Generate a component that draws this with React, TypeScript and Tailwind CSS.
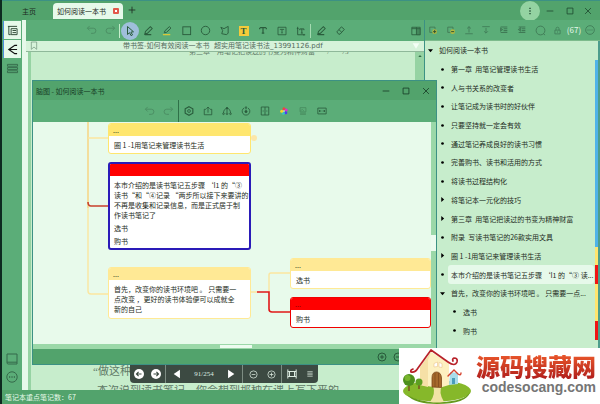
import React from 'react'
import clsx from 'clsx'

type IconProps = { children: React.ReactNode; className?: string }

const Icon = ({ children, className = 'size-3' }: IconProps) => (
  <svg viewBox="0 0 12 12" className={clsx('shrink-0 overflow-visible', className)} fill="none" stroke="currentColor" strokeWidth="1" aria-hidden="true">
    {children}
  </svg>
)

const icons = {
  undo: <path d="M1.5 3.5H8a2.8 2.8 0 0 1 0 5.6H5.5M4 1L1.5 3.5L4 6" />,
  redo: <path d="M10.5 3.5H4a2.8 2.8 0 0 0 0 5.6h2.5M8 1l2.5 2.5L8 6" />,
  cursor: <path d="M3.5 1.5v8l2-1.8 1.6 3 1.4-.8-1.6-2.8 2.6-.3z" />,
  pen: <path d="M2 10l.7-3L8 1.8l2 2L4.8 9zM2 10.5h7" strokeWidth="1.1" />,
  marker: (
    <>
      <path d="M2.5 8.5l.7-2.2L8 1.8l1.8 1.6L5 8z" />
      <path d="M1 10.5h8" stroke="#d8c83a" strokeWidth="1.4" />
    </>
  ),
  square: <rect x="2" y="2" width="8.5" height="8.5" />,
  circle: <circle cx="6" cy="6" r="4.6" />,
  polygon: <path d="M2 2.5l3.5 1.5L10 1.5V9L8 10.5 3 9.5 4 6z" />,
  underlineT: <path d="M2.5 2h7M6 2v6.5M2 3.8V2M10 3.8V2M4.5 8.5h3" strokeWidth="1.4" />,
  boxT: <path d="M1.2 1.5h9.6v9H1.2zM4 4.8V4h4v.8M6 4v4.3M5.2 8.3h1.6" />,
  cropT: <path d="M2 1v9.5h9M1 3h2M9.5 9.5v2M4.5 5V3.5h5V5M7 3.5V8.5M5.8 8.5h2.4" strokeWidth="1.1" />,
  eraser: <path d="M2 7.5L7 2l3.2 2.8L5.5 10H4zM4.2 5l3.2 3" />,
  panel: (
    <>
      <path d="M1 1.5h10v9H1zM6.5 1.5v9M1 3.2h10" />
      <path d="M7 3.5h4v7H7z" fill="currentColor" opacity=".45" />
    </>
  ),
  hexagon: (
    <>
      <path d="M6 .8l4.6 2.6v5.2L6 11.2 1.4 8.6V3.4z" strokeWidth="1.4" />
      <circle cx="6" cy="6" r="1.7" />
    </>
  ),
  share: <path d="M3.5 4H1.5v6.5h9V4h-2M6 8V1.5M4 3.2l2-1.9 2 1.9" />,
  tree: (
    <>
      <path d="M6 8V3M1.8 8.5C1.8 5 3.5 3.2 6 3s4.2 2 4.2 5.5" />
      <circle cx="1.8" cy="9.3" r="1" /><circle cx="6" cy="9.3" r="1" /><circle cx="10.2" cy="9.3" r="1" />
      <path d="M4.8 3L6 1.2 7.2 3z" fill="currentColor" />
    </>
  ),
  target: (
    <>
      <path d="M4 2.2a4.6 4.6 0 1 0 4.2.1M6 .2v4M4.7 2.2H7.3" />
      <circle cx="6" cy="6.7" r="1.3" fill="currentColor" />
    </>
  ),
  columns: <path d="M1.5 1.2h9v9.6h-9zM6 1.2v9.6M3.2 6h1.2M7.6 6h1.2" />,
  image: <path d="M2.5 2h7v5h-7zM2.5 8.5h7M2.5 10h7M3 6l2-2 2 2" />,
  fit: <path d="M1 2.5h10v7H1zM3 6h2.2M9 6H6.8M3 4.8v2.4M9 4.8v2.4" />,
  top: <path d="M6 9V2M3.7 4.2L6 2l2.3 2.2M1.5 10.5h9" />,
  bottom: <path d="M6 3.5v6M3.7 7.5L6 9.8l2.3-2.3M1.5 2h9" />,
  indent: <path d="M2 2.3h8M5.5 4.5H10M5.5 6.7H10M2 9h8M2 4v3l2-1.5z" strokeWidth="1.3" />,
  outdent: <path d="M2 2.3h8M5.5 4.5H10M5.5 6.7H10M2 9h8M4 4v3L2 5.5z" strokeWidth="1.3" />,
  lock: <path d="M2.5 5.5h7v5h-7zM4 5.5V3.6a2 2 0 0 1 4 0v1.9M6 7.2v1.6" />,
  search: <path d="M6 1.2a4.8 4.8 0 1 0 0 9.6 4.8 4.8 0 0 0 0-9.6M9 9.3l2 1.7" />,
  dots: (
    <>
      <circle cx="6" cy="6" r="5.2" />
      <path d="M3 6h1.2M5.4 6h1.2M7.8 6H9" strokeWidth="1.3" />
    </>
  ),
  outline: <path d="M1 1.5h10M2 1.5v9h2M4.5 4h6.5v6.5H4.5zM6 6h4M6 8.3h4" />,
  branch: <path d="M11 1.5H8.5L2 6l6.5 4.500H11M2 6H11" strokeWidth="1.3" />,
  list: <path d="M.5 1.5h11v2H.5zM.5 5h11v2H.5zM.5 8.5h11v2H.5z" />,
  book: <path d="M1 1h10v10H2.2A1.2 1.2 0 0 1 1 9.8zM1 9.2h10" />,
  minus: <path d="M2 6h8" />,
  box: <path d="M2.5 2.5h7v7h-7z" />,
  close: <path d="M2.5 2.5l7 7M9.5 2.5l-7 7" />,
  zoomIn: <path d="M6 1.2a4.8 4.8 0 1 0 0 9.6 4.8 4.8 0 0 0 0-9.6M3.5 6h5M6 3.5v5" />,
  zoomOut: <path d="M6 1.2a4.8 4.8 0 1 0 0 9.6 4.8 4.8 0 0 0 0-9.6M3.5 6h5" />,
  fitWidth: <path d="M1 .5v11M11 .5v11M1 3h10M1 9h10M3 3v6h6V3" strokeWidth="1.2" />,
  menu: <path d="M2 2.5h8M2 4.8h8M2 7.1h8M2 9.4h8" />,
  back: (
    <>
      <circle cx="6" cy="6" r="6" fill="#fff" stroke="none" />
      <path d="M9 6H3.3M5.5 3.5L3 6l2.5 2.5" stroke="#3c4a42" strokeWidth="1.4" />
    </>
  ),
  forward: (
    <>
      <circle cx="6" cy="6" r="6" fill="#fff" stroke="none" />
      <path d="M3 6h5.7M6.5 3.5L9 6 6.5 8.5" stroke="#3c4a42" strokeWidth="1.4" />
    </>
  ),
  prev: <path d="M9.5 1v10L2 6z" fill="#fff" stroke="none" />,
  next: <path d="M2.5 1v10L10 6z" fill="#fff" stroke="none" />,
}

const palette = (
  <svg viewBox="0 0 12 12" className="size-2" aria-hidden="true">
    <circle cx="6" cy="2.6" r="2.3" fill="#f0463c" />
    <circle cx="9.2" cy="4.6" r="2.3" fill="#e22bd0" />
    <circle cx="8.6" cy="8.6" r="2.3" fill="#4a3df0" />
    <circle cx="5" cy="9.2" r="2.3" fill="#35c6c0" />
    <circle cx="2.6" cy="6.4" r="2.3" fill="#f6d523" />
    <circle cx="6" cy="6" r="1" fill="#fff" />
  </svg>
)

const addNote = (sign: string) => (
  <svg viewBox="0 0 12 12" className="size-[9px]" aria-hidden="true">
    <path d="M1 1.5h7v7H1z" fill="none" stroke="#3f7250" />
    <circle cx="7.5" cy="7.5" r="3.2" fill="#b3b83f" />
    <path d={sign} stroke="#2c5236" strokeWidth="1.3" />
  </svg>
)

type ToolProps = { label: string; children: React.ReactNode; className?: string }

const Tool = ({ label, children, className }: ToolProps) => (
  <button aria-label={label} className={clsx('flex h-[18px] shrink-0 items-center justify-center', className)}>
    {children}
  </button>
)

const TitleBar = () => (
  <header className="flex h-5 items-start border-t border-[#3c9184] bg-[#52a36c] pl-[17px]">
    <nav className="flex flex-1 items-center">
      <a href="#" className="px-[3px] pt-px leading-4">主页</a>
      <div className="ml-[14px] mt-px flex h-4 items-center gap-[7px] rounded-t-sm bg-[#e6f9ea] px-1">
        <a href="#" className="leading-4">如何阅读一本书</a>
        <button aria-label="关闭" className="size-1.5 rounded-[1px] border-2 border-[#e2584a] bg-white" />
      </div>
      <Tool label="新建" className="ml-1">
        <Icon className="size-2.5"><path d="M6 2v8M2 6h8" /></Icon>
      </Tool>
    </nav>
    <div className="flex items-center pr-[3px] text-[#1f4a30]">
      <button aria-label="更多" className="flex size-5 items-center justify-center rounded-full bg-[#94d3a2]">
        <Icon className="size-2"><path d="M6 1v2M6 5v2M6 9v2" strokeWidth="2" /></Icon>
      </button>
      <Tool label="最小化" className="w-5"><Icon className="size-2.5">{icons.minus}</Icon></Tool>
      <Tool label="最大化" className="w-[19px]"><Icon className="size-2.5">{icons.box}</Icon></Tool>
      <Tool label="关闭窗口" className="w-[18px]"><Icon className="size-2.5">{icons.close}</Icon></Tool>
    </div>
  </header>
)

const Rail = () => (
  <aside className="flex w-5 shrink-0 flex-col items-center bg-[#5bad78] pb-1 pt-px text-[#35694a]">
    <Tool label="大纲" className="w-[18px] border-l border-[#4f8fe0] bg-[#e6f9ea] text-[#27422f]"><Icon className="size-[11px]">{icons.outline}</Icon></Tool>
    <Tool label="脑图" className="mt-px w-[18px] border-l border-[#4f8fe0] bg-[#e6f9ea] text-[#111]"><Icon className="size-[11px]">{icons.branch}</Icon></Tool>
    <Tool label="列表" className="mt-px"><Icon className="size-[11px]">{icons.list}</Icon></Tool>
    <div className="flex-1" />
    <Tool label="书架"><Icon>{icons.book}</Icon></Tool>
    <Tool label="更多选项"><Icon>{icons.dots}</Icon></Tool>
  </aside>
)

const drawTools = [
  { label: '画笔', icon: icons.pen },
  { label: '荧光笔', icon: icons.marker },
  { label: '矩形', icon: icons.square },
  { label: '圆形', icon: icons.circle },
  { label: '多边形', icon: icons.polygon },
]

const textTools = [
  { label: '文字下划线', icon: icons.underlineT },
  { label: '文本框', icon: icons.boxT },
  { label: '文本裁剪', icon: icons.cropT },
]

const DocToolbar = () => (
  <div className="flex h-[21px] shrink-0 items-center bg-[#5bad78] pr-[3px] pl-[55px] text-[#2a5c3c]">
    <Tool label="撤销" className="w-5 text-[#4a8c62]"><Icon className="size-[11px]">{icons.undo}</Icon></Tool>
    <Tool label="重做" className="w-[18px] text-[#4a8c62]"><Icon className="size-[11px]">{icons.redo}</Icon></Tool>
    <div className="h-3.5 w-px bg-[#c7edcc]" />
    <Tool label="选择" className="ml-px w-[18px] rounded-full bg-[#9fbfdb]"><Icon>{icons.cursor}</Icon></Tool>
    {drawTools.map((t) => (
      <Tool key={t.label} label={t.label} className="w-[19px]"><Icon className="size-[11px]">{t.icon}</Icon></Tool>
    ))}
    <Tool label="文字高亮" className="w-[19px]">
      <span className="flex size-[10px] items-center justify-center bg-[#f5cb3b] font-['Liberation_Serif',serif] text-[9px] font-bold">T</span>
    </Tool>
    {textTools.map((t) => (
      <Tool key={t.label} label={t.label} className="w-[19px]"><Icon className="size-[10px]">{t.icon}</Icon></Tool>
    ))}
    <div className="h-3.5 w-px bg-[#a5dbb2]" />
    <Tool label="手写笔" className="ml-px w-[19px]"><Icon className="size-[11px]">{icons.pen}</Icon></Tool>
    <Tool label="橡皮擦" className="w-[19px]"><Icon className="size-[11px]">{icons.eraser}</Icon></Tool>
    <Tool label="侧栏" className="ml-auto"><Icon className="size-2.5">{icons.panel}</Icon></Tool>
  </div>
)

type NodeProps = {
  className: string
  head?: string
  lines: string[]
  selected?: boolean
  tone: 'yellow' | 'pale' | 'red'
}

const MindNode = ({ className, head, lines, selected, tone }: NodeProps) => (
  <div
    className={clsx(
      'absolute overflow-hidden rounded-[3px] bg-white',
      tone === 'yellow' && 'border border-[#ffe66f]',
      tone === 'pale' && 'border border-[#ffe995]',
      tone === 'red' && (selected ? 'border-2 border-[#2a1bb8]' : 'border border-[#f00000]'),
      className
    )}
  >
    <div
      className={clsx(
        'h-3 pl-1 leading-3',
        tone === 'yellow' && 'bg-[#ffe66f]',
        tone === 'pale' && 'bg-[#ffe995]',
        tone === 'red' && 'bg-[#ff0000] text-[#7a0000]'
      )}
    >
      {head}
    </div>
    <div className={clsx('flex flex-col gap-[3px] pr-px', selected ? 'pl-1 pt-1' : 'pl-[5px] pt-1')}>
      {lines.map((line) => (
        <p key={line} className="whitespace-pre leading-[10px]">{line}</p>
      ))}
    </div>
  </div>
)

const mapTools = [
  { label: '设置', icon: icons.hexagon },
  { label: '导出', icon: icons.share },
  { label: '结构', icon: icons.tree },
  { label: '定位', icon: icons.target },
  { label: '分栏', icon: icons.columns },
]

const MindMapWindow = () => (
  <section className="absolute bottom-[25px] left-[6px] right-[-13px] top-[60px] z-10 flex flex-col border border-[#3c9184] bg-[#e8faeb]">
    <div className="flex h-[19px] shrink-0 items-center bg-[#52a36c] pl-[3px] text-[#183d27]">
      <h2 className="flex-1">脑图 - 如何阅读一本书</h2>
      <Tool label="最小化脑图" className="w-5"><Icon className="size-2.5">{icons.minus}</Icon></Tool>
      <Tool label="最大化脑图" className="w-5"><Icon className="size-2.5">{icons.box}</Icon></Tool>
      <Tool label="关闭脑图" className="w-5"><Icon className="size-2.5">{icons.close}</Icon></Tool>
    </div>
    <div className="flex h-[22px] shrink-0 items-center bg-[#5bad78] pl-[107px] text-[#2a5c3c]">
      <Tool label="撤销脑图" className="w-[19px] text-[#4a8c62]"><Icon className="size-[11px]">{icons.undo}</Icon></Tool>
      <Tool label="重做脑图" className="w-[19px] text-[#4a8c62]"><Icon className="size-[11px]">{icons.redo}</Icon></Tool>
      <div className="h-full w-px bg-[#2f7048]" />
      {mapTools.map((t) => (
        <Tool key={t.label} label={t.label} className="w-[19px]"><Icon className="size-[10px]">{t.icon}</Icon></Tool>
      ))}
      <Tool label="配色" className="w-[19px]">{palette}</Tool>
      <Tool label="图片" className="w-[19px] text-[#478a5e]"><Icon className="size-2.5">{icons.image}</Icon></Tool>
      <Tool label="适应窗口" className="w-[19px]"><Icon className="size-2.5">{icons.fit}</Icon></Tool>
    </div>
    <div className="flex min-h-0 flex-1">
      <div className="relative flex-1 overflow-hidden">
        <svg className="absolute left-0 top-0 h-full w-full" fill="none" aria-hidden="true">
          <path d="M55 0V86" stroke="#f8d27c" strokeWidth="1.4" />
          <path d="M55 86V169q0 3 3 3H77M55 16H77" stroke="#fbe6a0" strokeWidth="1.4" />
          <path d="M55 80q0 4 3 4H77" stroke="#c8402c" strokeWidth="1.6" />
          <circle cx="221" cy="16" r="3" fill="#fce7a8" />
          <path d="M218 170H224M236 170V153q0-2 2-2H258" stroke="#fbe6a0" strokeWidth="1.4" />
          <path d="M224 170H236V187q0 3 3 3H258" stroke="#e01818" strokeWidth="1.6" />
        </svg>
        <MindNode className="left-[75px] top-px h-[31px] w-[143px]" tone="yellow" head="..." lines={['圈 1 -1用笔记来管理读书生活']} />
        <MindNode
          className="left-[75px] top-10 h-[88px] w-[143px]"
          tone="red"
          selected
          lines={['本市介绍的是读书笔记五步骤 ‘I1 的“③\n读书“和“④记录 “两步所以接下来要讲的\n不再是收集和记录信息，而是正式居于制\n作读书笔记了', '选书', '购书']}
        />
        <MindNode
          className="left-[75px] top-[145px] h-[52px] w-[143px]"
          tone="pale"
          head="..."
          lines={['首先，改变你的读书环境吧 。 只需要一\n点改变 ，更好的读书体验便可以成就全\n新的自己']}
        />
        <MindNode className="left-[257px] right-0 top-[136px] h-[31px]" tone="pale" head="..." lines={['选书']} />
        <MindNode className="left-[257px] right-0 top-[175px] h-[31px]" tone="red" head="..." lines={['购书']} />
      </div>
      <div className="flex w-[5px] flex-col bg-[#9bd8a8] pt-[113px]">
        <div className="h-4 bg-[#ecfbef]" />
      </div>
    </div>
    <div className="flex h-[5px] shrink-0 bg-[#9bd8a8] pl-[187px]">
      <div className="h-[3px] w-8 self-center bg-[#ecfbef]" />
    </div>
    <div className="flex h-[15px] shrink-0 items-center justify-end gap-[6px] bg-[#52a36c] pr-[33px] text-[#1f4a30]">
      <Tool label="放大脑图"><Icon className="size-2.5">{icons.zoomIn}</Icon></Tool>
      <Tool label="缩小脑图"><Icon className="size-2.5">{icons.zoomOut}</Icon></Tool>
    </div>
  </section>
)

const PageControls = () => (
  <div className="absolute bottom-[7px] left-[104px] z-20 flex h-[18px] items-center rounded-b-sm bg-[#3c4a42] text-[#dcebe0]">
    <Tool label="后退" className="w-[17px]"><Icon className="size-2.5">{icons.back}</Icon></Tool>
    <Tool label="前进" className="w-[18px]"><Icon className="size-2.5">{icons.forward}</Icon></Tool>
    <div className="h-full w-px bg-[#7d8d83]" />
    <Tool label="上一页" className="w-[22px]"><Icon className="size-2.5">{icons.prev}</Icon></Tool>
    <span className="w-8 text-center font-['Liberation_Serif',serif]">91/254</span>
    <Tool label="下一页" className="w-[22px]"><Icon className="size-2.5">{icons.next}</Icon></Tool>
    <div className="h-full w-px bg-[#7d8d83]" />
    <Tool label="缩小" className="ml-px w-[18px]"><Icon className="size-[9px]">{icons.zoomOut}</Icon></Tool>
    <Tool label="放大" className="w-[19px]"><Icon className="size-[9px]">{icons.zoomIn}</Icon></Tool>
    <div className="h-full w-px bg-[#7d8d83]" />
    <Tool label="适合宽度" className="w-5"><Icon className="size-2.5">{icons.fitWidth}</Icon></Tool>
    <Tool label="页面菜单" className="w-4"><Icon className="size-2">{icons.menu}</Icon></Tool>
  </div>
)

const Document = () => (
  <main className="relative flex min-w-0 flex-1 flex-col">
    <DocToolbar />
    <div className="flex h-[11px] shrink-0 items-center border-b border-[#8fb89a] bg-[#d6f3da] px-1 text-[#52695a]">
      <Icon className="size-2 text-[#6c8f78]"><path d="M2 0h8v11L6 7.5 2 11z" /></Icon>
      <p className="flex-1 overflow-hidden whitespace-pre pl-[85px] font-['DejaVu_Sans','Noto_Sans_CJK_SC',sans-serif]">带书签-如何有效阅读一本书  超实用笔记读书法_13991126.pdf</p>
      <Icon className="size-2 text-[#f4fff6]"><path d="M1 2h10L6 10z" fill="currentColor" stroke="none" /></Icon>
    </div>
    <div className="flex min-h-0 flex-1 bg-[#c7edcc]">
      <div className="w-[5px] shrink-0 border-l-2 border-[#e6f9ea] bg-[#96d3a3]" />
      <div className="flex min-w-0 flex-1 flex-col overflow-hidden font-['Liberation_Serif','Noto_Sans_CJK_SC',serif] text-[#5f7a67]">
        <div className="flex h-1 items-end overflow-hidden">
          <p className="whitespace-pre pl-[158px] leading-[7px]">第三章    用笔记把读过的书变为精神财富       /       73</p>
        </div>
        <div className="flex-1" />
        <p className="whitespace-nowrap pl-[62px] text-[11px] leading-4">“做这种</p>
        <div className="mt-1.5 h-[5px] overflow-hidden">
          <p className="whitespace-nowrap pl-[66px] text-[11px] leading-[11px]">本次说到读书笔记，你会想到那种在课上写下来的</p>
        </div>
      </div>
      <div className="w-[9px] shrink-0 bg-[#96d3a3] pt-0.5">
        <Icon className="mx-auto size-1"><path d="M1 9L6 3l5 6z" fill="#2f6b45" stroke="none" /></Icon>
      </div>
    </div>
    <MindMapWindow />
    <PageControls />
  </main>
)

type Entry = { text: string; level: 0 | 1 | 2; mark: 'open' | 'closed' | 'dot'; bar?: 'blue' | 'yellow' | 'red'; active?: boolean }

const entries: Entry[] = [
  { text: '如何阅读一本书', level: 0, mark: 'open' },
  { text: '第一章  用笔记管理读书生活', level: 1, mark: 'dot', bar: 'blue' },
  { text: '人与书关系的改变者', level: 1, mark: 'dot', bar: 'blue' },
  { text: '让笔记成为读书时的好伙伴', level: 1, mark: 'dot', bar: 'blue' },
  { text: '只要坚持就一定会有效', level: 1, mark: 'dot', bar: 'blue' },
  { text: '通过笔记养成良好的读书习惯', level: 1, mark: 'dot', bar: 'blue' },
  { text: '完善购书、读书和活用的方式', level: 1, mark: 'dot', bar: 'blue' },
  { text: '将读书过程结构化', level: 1, mark: 'dot', bar: 'blue' },
  { text: '将笔记本一元化的技巧', level: 1, mark: 'closed', bar: 'blue' },
  { text: '第三章  用笔记把读过的书变为精神财富', level: 1, mark: 'closed', bar: 'blue' },
  { text: '附录  写读书笔记的26款实用文具', level: 1, mark: 'dot', bar: 'blue' },
  { text: '圈 1 -1用笔记来管理读书生活', level: 1, mark: 'closed', bar: 'yellow' },
  { text: '本市介绍的是读书笔记五步骤 ‘I1 的“③ 读...', level: 1, mark: 'dot', bar: 'red', active: true },
  { text: '首先，改变你的读书环境吧 。 只需要一点...', level: 1, mark: 'open', bar: 'yellow' },
  { text: '选书', level: 2, mark: 'dot', bar: 'yellow' },
  { text: '购书', level: 2, mark: 'dot', bar: 'red' },
]

const marks = {
  open: <path d="M0 3h12L6 10z" fill="#000" stroke="none" />,
  closed: <path d="M3 0l7 6-7 6z" fill="#000" stroke="none" />,
  dot: <circle cx="6" cy="6" r="3.2" fill="#000" stroke="none" />,
}

const Sidebar = () => (
  <aside className="flex w-[176px] shrink-0 flex-col border-l border-[#3c9184] bg-[#c7edcc]">
    <div className="flex h-[21px] shrink-0 items-center border-b border-[#7dbb8c] bg-[#5bad78] text-[#3f7a55]">
      <Tool label="添加" className="w-[17px]">{addNote('M5.5 7.5h4M7.5 5.5v4')}</Tool>
      <Tool label="移除" className="w-[18px]">{addNote('M5.5 7.5h4')}</Tool>
      <Tool label="上移" className="w-[17px]"><Icon className="size-[10px]">{icons.top}</Icon></Tool>
      <Tool label="下移" className="w-[18px]"><Icon className="size-[10px]">{icons.bottom}</Icon></Tool>
      <Tool label="缩进" className="w-[18px]"><Icon className="size-[10px]">{icons.indent}</Icon></Tool>
      <Tool label="减少缩进" className="w-[18px]"><Icon className="size-[10px]">{icons.outdent}</Icon></Tool>
      <Tool label="搜索" className="w-[18px]"><Icon className="size-[11px]">{icons.search}</Icon></Tool>
      <Tool label="锁定" className="w-[17px]"><Icon className="size-[9px]">{icons.lock}</Icon></Tool>
      <span className="w-4 text-center text-[8px] text-[#e6f9ea]">(67)</span>
      <Tool label="更多笔记选项" className="w-4"><Icon className="size-[10px]">{icons.dots}</Icon></Tool>
    </div>
    {/* rows share the height above the logo */}
    <ul className="flex min-h-0 flex-1 flex-col border-r-2 border-[#4d9d8c] pb-[50px]">
      {entries.map((e) => (
        <li
          key={e.text}
          className={clsx(
            'flex min-h-0 flex-1 items-center border-r-[3px] pr-px',
            e.level === 0 && 'pl-[3px]',
            e.level === 1 && 'pl-[15px]',
            e.level === 2 && 'pl-[27px]',
            !e.bar && 'border-transparent',
            e.bar === 'blue' && 'border-[#4fb3e8]',
            e.bar === 'yellow' && 'border-[#ffe56e]',
            e.bar === 'red' && 'border-[#f01414]'
          )}
        >
          <Icon className="size-[5px]">{marks[e.mark]}</Icon>
          <a
            href="#"
            className={clsx('ml-[3px] flex flex-1 items-center self-stretch overflow-hidden whitespace-pre pl-[3px]', e.active && 'rounded-[3px] bg-[#e6f9ea]')}
          >
            {e.text}
          </a>
        </li>
      ))}
    </ul>
  </aside>
)

const House = () => (
  <svg viewBox="0 0 72 56" className="h-14 w-[72px] shrink-0" fill="none" aria-hidden="true">
    <ellipse cx="38" cy="43" rx="34" ry="10.5" fill="#86b82a" />
    <path d="M8 47q14 8 34 7 24-1 29-10-3 12-33 12-22 0-30-9z" fill="#649a1c" />
    <path d="M34 38h9q-4 6 2 16-8 1-14 0 6-8 3-16z" fill="#f1e3a4" />
    <path d="M32 4L50 15v22l-10 3-18-3V20z" fill="#fdf0c0" />
    <path d="M32 4L21 19v18l8 2V12z" fill="#f6e0a6" />
    <path d="M33 39V30q0-6 4.500-6t5 6v9.500z" fill="#a5692b" stroke="#7c4718" strokeWidth=".8" />
    <path d="M36 25v14M39.500 25v14" stroke="#7c4718" strokeWidth=".7" />
    <path d="M35 15.500l3.500-1.500v4.500l-3.500 .5zM40 14.500l3 1v4l-3-.5z" fill="#fff" stroke="#ecc48c" strokeWidth=".6" />
    <path d="M51 24l8 1v11l-9 1z" fill="#a9dcea" />
    <path d="M53 30h3v6h-3z" fill="#4a9dbb" />
    <path d="M49 28l6-6 4 4q3 2 3-1" stroke="#d5402c" strokeWidth="1.400" strokeLinecap="round" />
    <path d="M14 21q-3 1-2 3 4 1 7-4L32 2l17 12q7 5 9 0 1-4-3-4-2 1-1 3" stroke="#b8222a" strokeWidth="1.700" strokeLinecap="round" strokeLinejoin="round" />
    <path d="M10 36v7M20 36v5" stroke="#7b5a22" strokeWidth="1.600" />
    <circle cx="10" cy="32" r="6" fill="#4d8f1c" />
    <circle cx="8.500" cy="30" r="3" fill="#78b52c" />
    <circle cx="20" cy="34" r="3.500" fill="#5da021" />
  </svg>
)

const SiteLogo = () => (
  <a href="#" className="absolute bottom-0 right-0 z-30 flex h-14 w-[201px] items-start bg-white pr-1">
    <House />
    <span className="flex flex-1 flex-col items-end pt-[5px]">
      <span className="bg-gradient-to-b from-[#ee5a2c] to-[#b01c1c] bg-clip-text text-[24px] font-black leading-[26px] text-transparent">源码搜藏网</span>
      <span className="font-['Liberation_Sans',sans-serif] text-[14px] font-bold leading-4 text-[#757575]">codesocang.com</span>
    </span>
  </a>
)

const App = () => {
  return (
    <div className="relative flex h-screen flex-col overflow-hidden border-l-2 border-[#0d2a20] bg-[#52a36c] font-['Noto_Sans_CJK_SC',sans-serif] text-[7px] leading-[10px] text-[#1d2b22]">
      <TitleBar />
      <div className="flex min-h-0 flex-1">
        <Rail />
        <div className="w-1 shrink-0 bg-[#e6f9ea]" />
        <Document />
        <Sidebar />
      </div>
      <footer className="flex h-3.5 shrink-0 items-center pl-[3px] text-[#e6f9ea]">笔记本重点笔记数：67</footer>
      <SiteLogo />
    </div>
  )
}

export default App
